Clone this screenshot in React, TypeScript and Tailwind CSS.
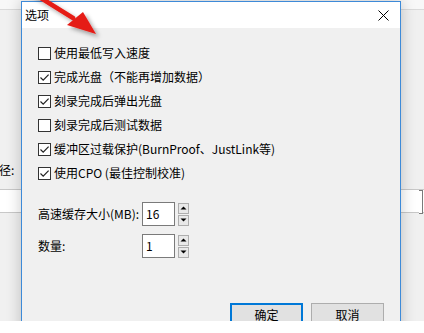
import React from "react";

function Check({ checked, label }: { checked: boolean; label: string }) {
  return (
    <div className="flex h-[24px] items-center">
      <div className="flex h-[13px] w-[13px] items-center justify-center border border-[#333333] bg-white">
        {checked && (
          <svg width="11" height="11" viewBox="0 0 11 11">
            <path d="M1.5 5.5 L4.2 8.2 L9.6 2.6" fill="none" stroke="#222" strokeWidth="1.2" />
          </svg>
        )}
      </div>
      <span className="ml-[3px] text-[12px] leading-none text-black">{label}</span>
    </div>
  );
}

function Spin({ value }: { value: string }) {
  return (
    <div className="flex items-center">
      <div className="flex h-[24px] w-[33px] items-center border border-[#7a7a7a] bg-white pl-[3px] text-[12px] leading-none text-black">
        {value}
      </div>
      <div className="ml-[3px] flex flex-col gap-[1px]">
        <div className="flex h-[11px] w-[11px] items-center justify-center border border-[#adadad] bg-[#e8e8e8]">
          <svg width="7" height="4" viewBox="0 0 7 4">
            <path d="M0.5 3.5 L3.5 0.5 L6.5 3.5 Z" fill="#000" />
          </svg>
        </div>
        <div className="flex h-[11px] w-[11px] items-center justify-center border border-[#adadad] bg-[#e8e8e8]">
          <svg width="7" height="4" viewBox="0 0 7 4">
            <path d="M0.5 0.5 L6.5 0.5 L3.5 3.5 Z" fill="#000" />
          </svg>
        </div>
      </div>
    </div>
  );
}

export default function App() {
  return (
    <div className="flex h-[333px] w-[424px] flex-col overflow-hidden bg-white font-['Noto_Sans_CJK_SC',sans-serif]">
      <div className="relative h-[321px] w-full overflow-hidden bg-[#f0f0f0]">
        {/* background window */}
        <div className="absolute inset-0 flex flex-col">
          <div className="h-[10px] border-b border-[#dadada] bg-[#f8f8f8]" />
          <div className="mt-[152px] flex h-[16px] items-center pl-[0px] text-[12px] text-black">
            <span className="-ml-[1px]">径:</span>
          </div>
          <div className="mt-[11px] h-[24px] border-y border-[#c8c8c8] bg-white" />
        </div>
        <div className="absolute right-[1px] top-[190px] h-[24px] w-[4px] border-y border-r border-[#7a7a7a] bg-white" />

        {/* dialog */}
        <div className="absolute left-[21px] top-[1px] flex h-[340px] w-[380px] flex-col border border-[#3d8ad8] bg-[#f0f0f0] shadow-[0_0_14px_rgba(0,0,0,0.22)]">
          <div className="flex h-[26px] items-center justify-between bg-white pl-[3px] pr-[11px]">
            <span className="text-[12px] leading-none text-black">选项</span>
            <svg width="11" height="11" viewBox="0 0 11 11">
              <path d="M0.5 0.5 L10.5 10.5 M10.5 0.5 L0.5 10.5" stroke="#000" strokeWidth="1" />
            </svg>
          </div>
          <div className="flex flex-1 flex-col px-[16px] pt-[13px]">
            <Check checked={false} label="使用最低写入速度" />
            <Check checked={true} label="完成光盘（不能再增加数据）" />
            <Check checked={true} label="刻录完成后弹出光盘" />
            <Check checked={false} label="刻录完成后测试数据" />
            <Check checked={true} label="缓冲区过载保护(BurnProof、JustLink等)" />
            <Check checked={true} label="使用CPO (最佳控制校准)" />
            <div className="mt-[17px] flex items-center">
              <span className="w-[104px] text-[12px] leading-none text-black">高速缓存大小(MB):</span>
              <Spin value="16" />
            </div>
            <div className="mt-[8px] flex items-center">
              <span className="w-[104px] text-[12px] leading-none text-black">数量:</span>
              <Spin value="1" />
            </div>
            <div className="mt-[45px] flex justify-end gap-[8px]">
              <div className="flex h-[23px] w-[73px] items-center justify-center border border-[#0078d7] bg-[#e1e1e1] text-[12px] leading-none text-black shadow-[inset_0_0_0_1px_#0078d7]">
                确定
              </div>
              <div className="flex h-[23px] w-[73px] items-center justify-center border border-[#adadad] bg-[#e1e1e1] text-[12px] leading-none text-black">
                取消
              </div>
            </div>
          </div>
        </div>

        {/* red arrow */}
        <svg className="absolute left-0 top-0" width="120" height="50" viewBox="0 0 120 50">
          <defs>
            <filter id="sh" x="-30%" y="-30%" width="160%" height="160%">
              <feDropShadow dx="3" dy="3" stdDeviation="2" floodColor="#000" floodOpacity="0.35" />
            </filter>
          </defs>
          <g filter="url(#sh)">
            <path d="M28 -10 L73 18" stroke="#e51b16" strokeWidth="4.5" strokeLinecap="round" />
            <path d="M67 25 L83 12 L96 34 Z" fill="#e51b16" />
          </g>
        </svg>
      </div>
      <div className="h-[12px] w-full bg-white" />
    </div>
  );
}
